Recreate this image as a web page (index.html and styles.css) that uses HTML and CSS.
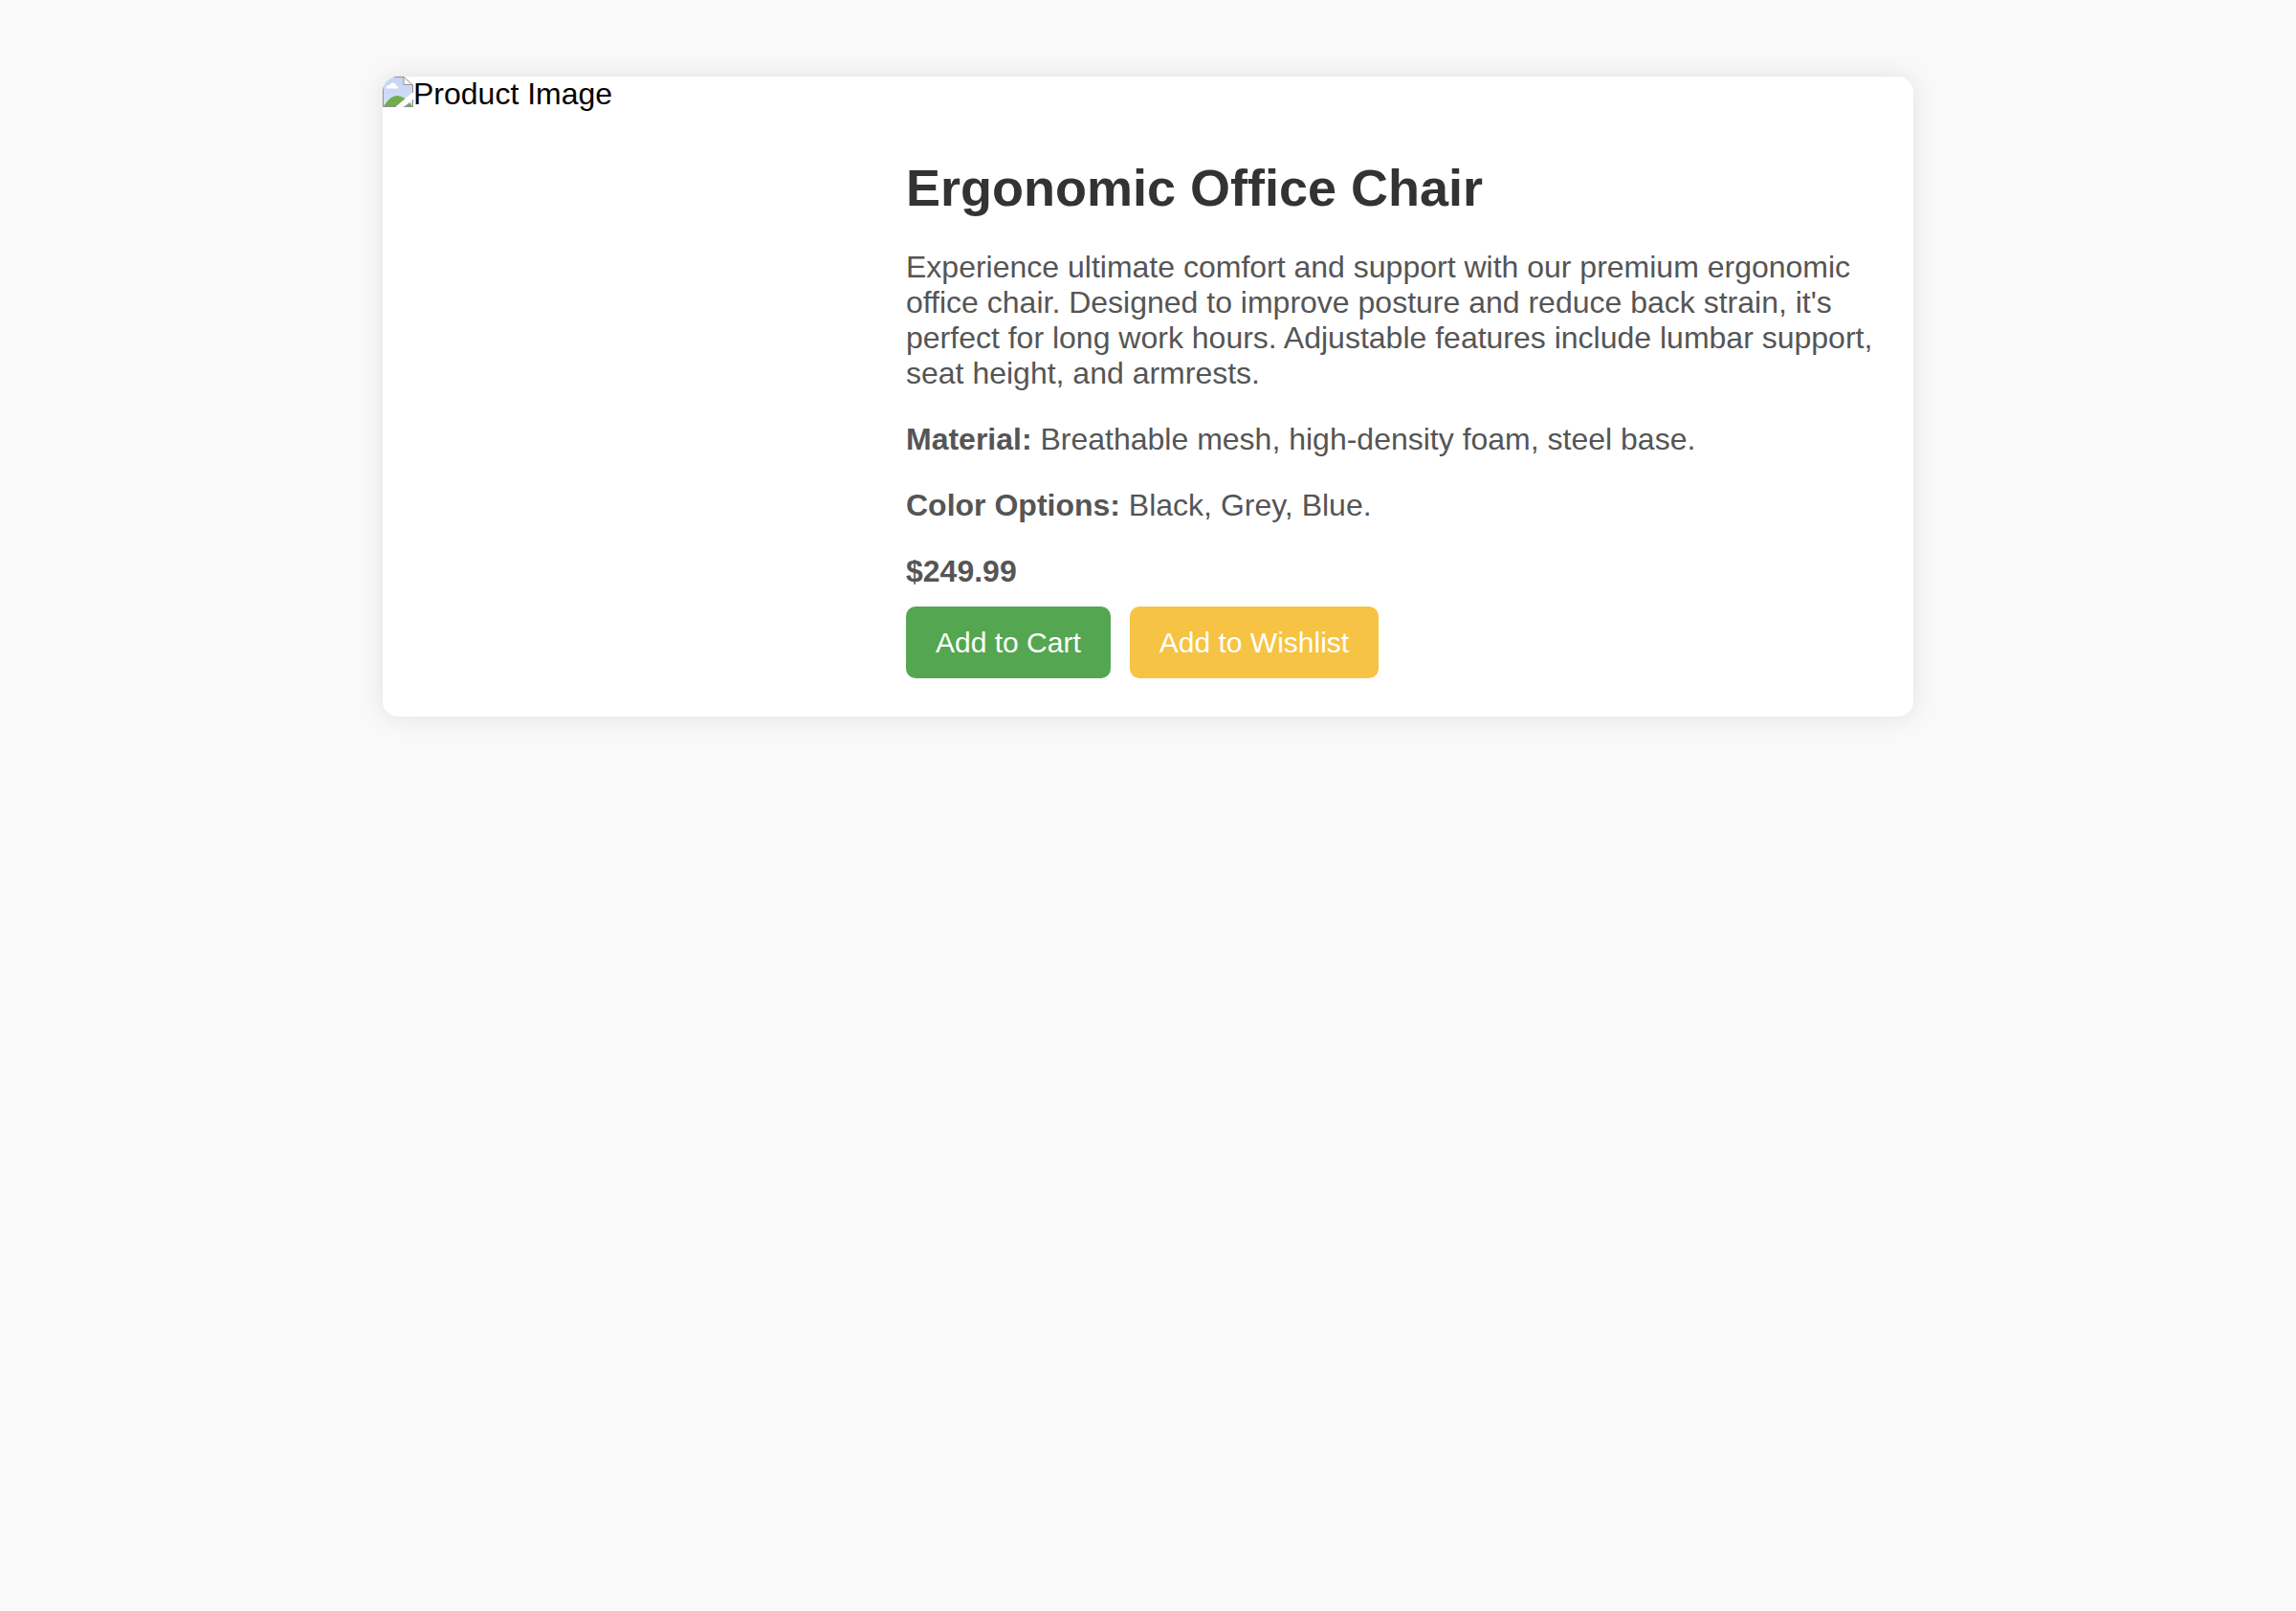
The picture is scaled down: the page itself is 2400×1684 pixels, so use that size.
FILE: index.html
```html
<!DOCTYPE html>
<html lang="en">
<head>
  <meta charset="UTF-8">
  <meta name="viewport" content="width=device-width, initial-scale=1">
  <title>Ergonomic Office Chair</title>
  <link rel="stylesheet" href="styles.css">
</head>
<body>
  <main class="product">
    <div class="product-image">
      <svg class="image-icon" viewBox="0 0 32 32" aria-hidden="true">
        <defs>
          <linearGradient id="sky" x1="0" y1="0" x2="0" y2="1">
            <stop offset="0" stop-color="#c3d3f3"/>
            <stop offset="1" stop-color="#d6e1f8"/>
          </linearGradient>
        </defs>
        <path d="M0 0H22L32 9V32H0Z" fill="url(#sky)"/>
        <path d="M4 12.500Q3 9 7 9Q8 6 11 6.500Q14 7 14 9.500Q17 10 16 12.500Z" fill="#fff"/>
        <path d="M1 31Q8 20 15 20Q23 20 31 31Z" fill="#70ad4b"/>
        <path d="M32 16V24L22 32H13Z" fill="#fff"/>
        <path d="M22 0L32 9H22Z" fill="#fff"/>
        <path d="M0.500 0V31.500H14M22 31.500H31.500V24M31.500 17V9L22 0.500H0M22 0.500V8.500H31.500" fill="none" stroke="#929292"/>
      </svg>
      <span>Product Image</span>
    </div>
    <section class="product-info">
      <h1 class="product-title">Ergonomic Office Chair</h1>
      <p>Experience ultimate comfort and support with our premium ergonomic office chair. Designed to improve posture and reduce back strain, it's perfect for long work hours. Adjustable features include lumbar support, seat height, and armrests.</p>
      <p><strong>Material:</strong> Breathable mesh, high-density foam, steel base.</p>
      <p><strong>Color Options:</strong> Black, Grey, Blue.</p>
      <p><strong>$249.99</strong></p>
      <div class="actions">
        <button class="button button-cart" type="button">Add to Cart</button>
        <button class="button button-wishlist" type="button">Add to Wishlist</button>
      </div>
    </section>
  </main>
</body>
</html>
```
FILE: styles.css
```css
* {
  box-sizing: border-box;
}

body {
  margin: 0;
  padding: 80px 40px;
  background: #f9f9f9;
  color: #000;
  font: 32px/37px "Liberation Sans", Arial, sans-serif;
}

.product {
  display: grid;
  grid-template-columns: 507fr 1093fr;
  max-width: 1600px;
  margin: 0 auto;
  overflow: hidden;
  background: #fff;
  border-radius: 16px;
  box-shadow: 0 0 26px rgba(0, 0, 0, 0.1);
}

.product-image {
  display: flex;
  align-items: flex-start;
}

.image-icon {
  flex: none;
  width: 32px;
  height: 32px;
}

.product-info {
  padding: 84px 40px 40px;
  color: #555;
}

.product-title {
  margin: 0 0 33px;
  color: #333;
  font-size: 54px;
  line-height: 64px;
}

.product-info p {
  margin: 0 0 32px;
}

.product-info p:last-of-type {
  margin-bottom: 18px;
}

.actions {
  display: flex;
  flex-wrap: wrap;
  gap: 20px;
}

.button {
  padding: 20px 31px;
  border: 0;
  border-radius: 10px;
  color: #fff;
  font: inherit;
  font-size: 30px;
  line-height: 35px;
  cursor: pointer;
}

.button-cart {
  background: #54a651;
}

.button-wishlist {
  background: #f6c344;
}
```
